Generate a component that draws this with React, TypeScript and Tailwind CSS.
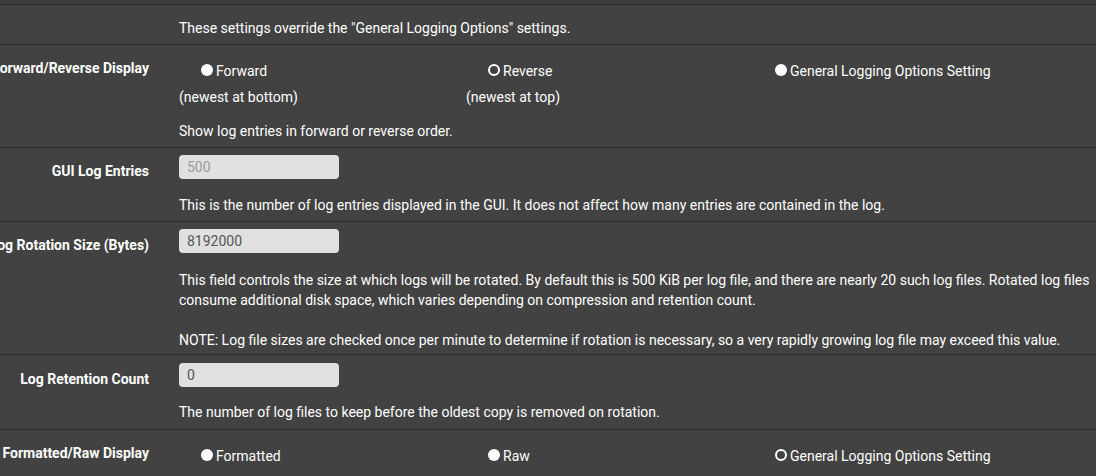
import React from "react";

const font = { fontFamily: "Roboto, 'Noto Sans', sans-serif" };

function Radio({ label, checked }: { label: string; checked?: boolean }) {
  return (
    <div className="flex items-start pl-[22px] leading-[20px]">
      <span
        className={
          checked
            ? "mt-[3px] h-[12px] w-[12px] shrink-0 rounded-full border-2 border-white bg-[#424242]"
            : "mt-[3px] h-[12px] w-[12px] shrink-0 rounded-full bg-white"
        }
      />
      <span className="ml-[3px] whitespace-nowrap">{label}</span>
    </div>
  );
}

function Label({ text, pt }: { text: string; pt: string }) {
  return (
    <div className={`flex w-[164px] shrink-0 justify-end pr-[15px] ${pt}`}>
      <span className="shrink-0 whitespace-nowrap font-bold leading-[20px]">{text}</span>
    </div>
  );
}

function Field({ value, placeholder }: { value?: string; placeholder?: string }) {
  return (
    <div className="flex h-[24px] w-[160px] items-center rounded-[4px] bg-[#e0e0e0] px-[8px] leading-[20px]">
      {value ? (
        <span className="text-[#555555]">{value}</span>
      ) : (
        <span className="text-[#9a9a9a]">{placeholder}</span>
      )}
    </div>
  );
}

export default function App() {
  return (
    <div className="h-[476px] w-[1096px] overflow-hidden bg-[#424242] text-[14px] text-white" style={font}>
      <div className="h-[4px] border-b border-[#2c2c2c] bg-[#3e3e3e] box-content" />

      <div className="flex h-[40px] border-b border-[#2c2c2c]">
        <div className="w-[164px] shrink-0" />
        <div className="pl-[15px] pt-[13px] leading-[20px]">
          These settings override the "General Logging Options" settings.
        </div>
      </div>

      <div className="flex h-[103px] border-b border-[#2c2c2c]">
        <Label text="Forward/Reverse Display" pt="pt-[13px]" />
        <div className="flex-1 pl-[15px] pt-[16px]">
          <div className="grid grid-cols-[287px_287px_1fr]">
            <div>
              <Radio label="Forward" />
              <div className="mt-[6px] leading-[20px]">(newest at bottom)</div>
            </div>
            <div>
              <Radio label="Reverse" checked />
              <div className="mt-[6px] leading-[20px]">(newest at top)</div>
            </div>
            <div>
              <Radio label="General Logging Options Setting" />
            </div>
          </div>
          <div className="mt-[14px] leading-[20px]">Show log entries in forward or reverse order.</div>
        </div>
      </div>

      <div className="flex h-[74px] border-b border-[#2c2c2c]">
        <Label text="GUI Log Entries" pt="pt-[13px]" />
        <div className="flex-1 pl-[15px] pt-[7px]">
          <Field placeholder="500" />
          <div className="mt-[16px] leading-[20px]">
            This is the number of log entries displayed in the GUI. It does not affect how many entries are contained in the log.
          </div>
        </div>
      </div>

      <div className="flex h-[133px] border-b border-[#2c2c2c]">
        <Label text="Log Rotation Size (Bytes)" pt="pt-[13px]" />
        <div className="flex-1 pl-[15px] pt-[7px]">
          <Field value="8192000" />
          <div className="mt-[17px] pr-[4px] leading-[20px]">
            This field controls the size at which logs will be rotated. By default this is 500 KiB per log file, and there are nearly 20 such log files. Rotated log files consume additional disk space, which varies depending on compression and retention count.
            <br />
            <br />
            NOTE: Log file sizes are checked once per minute to determine if rotation is necessary, so a very rapidly growing log file may exceed this value.
          </div>
        </div>
      </div>

      <div className="flex h-[75px] border-b border-[#2c2c2c]">
        <Label text="Log Retention Count" pt="pt-[14px]" />
        <div className="flex-1 pl-[15px] pt-[8px]">
          <Field value="0" />
          <div className="mt-[15px] leading-[20px]">
            The number of log files to keep before the oldest copy is removed on rotation.
          </div>
        </div>
      </div>

      <div className="flex h-[46px]">
        <Label text="Formatted/Raw Display" pt="pt-[13px]" />
        <div className="flex-1 pl-[15px] pt-[16px]">
          <div className="grid grid-cols-[287px_287px_1fr]">
            <Radio label="Formatted" />
            <Radio label="Raw" />
            <Radio label="General Logging Options Setting" checked />
          </div>
        </div>
      </div>
    </div>
  );
}
